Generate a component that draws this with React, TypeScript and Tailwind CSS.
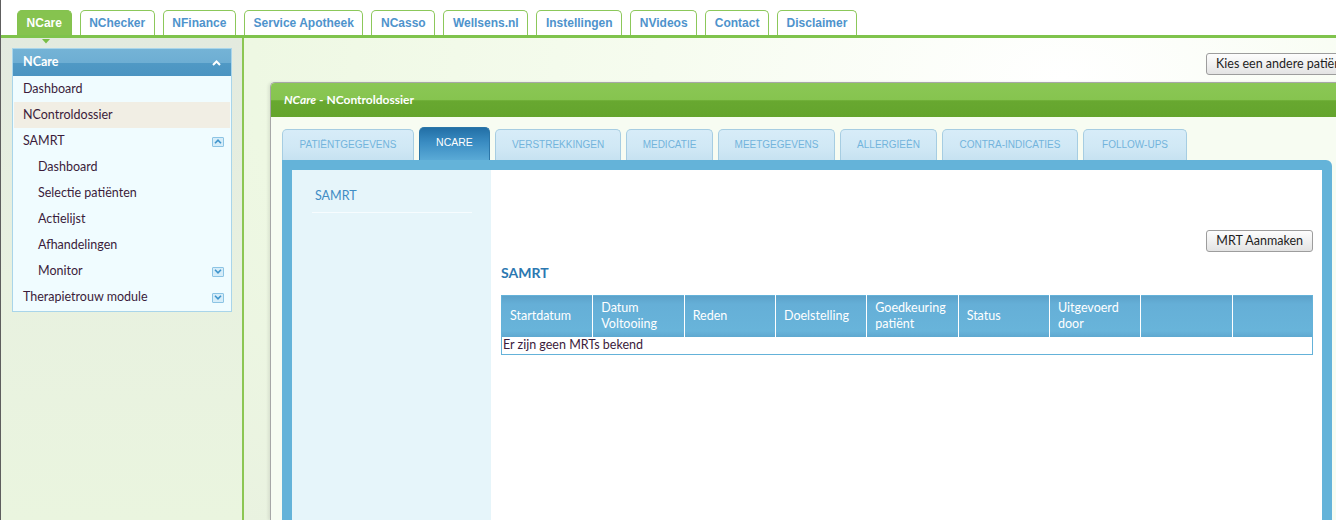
import React from 'react';

const navTabs = [
  'NCare',
  'NChecker',
  'NFinance',
  'Service Apotheek',
  'NCasso',
  'Wellsens.nl',
  'Instellingen',
  'NVideos',
  'Contact',
  'Disclaimer',
];

const dossierTabs: { label: string; w: string; active?: boolean }[] = [
  { label: 'PATIËNTGEGEVENS', w: 'w-[132px]' },
  { label: 'NCARE', w: 'w-[71px]', active: true },
  { label: 'VERSTREKKINGEN', w: 'w-[126px]' },
  { label: 'MEDICATIE', w: 'w-[87px]' },
  { label: 'MEETGEGEVENS', w: 'w-[117px]' },
  { label: 'ALLERGIEËN', w: 'w-[97px]' },
  { label: 'CONTRA-INDICATIES', w: 'w-[136px]' },
  { label: 'FOLLOW-UPS', w: 'w-[104px]' },
];

const columns: { label: React.ReactNode; w: string }[] = [
  { label: 'Startdatum', w: 'w-[91px]' },
  { label: <>Datum<br />Voltooiing</>, w: 'w-[91px]' },
  { label: 'Reden', w: 'w-[91px]' },
  { label: 'Doelstelling', w: 'w-[91px]' },
  { label: <>Goedkeuring<br />patiënt</>, w: 'w-[91px]' },
  { label: 'Status', w: 'w-[91px]' },
  { label: <>Uitgevoerd<br />door</>, w: 'w-[91px]' },
  { label: '', w: 'w-[91px]' },
  { label: '', w: 'w-[80px]' },
];

function ToggleIcon({ up }: { up?: boolean }) {
  return (
    <span className="flex h-[10px] w-[12px] items-center justify-center rounded-[1px] border border-[#8cc4e4] bg-[#d6edf9]">
      <svg width="8" height="5" viewBox="0 0 8 5">
        <polyline
          points={up ? '1,4.2 4,1.2 7,4.2' : '1,0.8 4,3.8 7,0.8'}
          fill="none"
          stroke="#3f95cc"
          strokeWidth="1.6"
        />
      </svg>
    </span>
  );
}

function SideItem({
  label,
  sub,
  active,
  toggle,
}: {
  label: string;
  sub?: boolean;
  active?: boolean;
  toggle?: 'up' | 'down';
}) {
  return (
    <div
      className={`flex h-[26px] items-center justify-between pr-[6px] pt-[1px] ${sub ? 'pl-[24px]' : 'pl-[9px]'} ${
        active ? 'bg-[#f1eee4]' : ''
      }`}
    >
      <span>{label}</span>
      {toggle && <ToggleIcon up={toggle === 'up'} />}
    </div>
  );
}

export default function App() {
  return (
    <div className="relative h-[520px] w-[1336px] overflow-hidden border-l border-[#5e5e5e] bg-white [font-family:Lato,'Open_Sans',sans-serif]">
      {/* hoofdmenu */}
      <div className="flex h-[35px] items-end gap-[8px] pl-[16px] [font-family:'Liberation_Sans',Arial,sans-serif]">
        {navTabs.map((t, i) => (
          <div
            key={t}
            className={`flex h-[25px] items-center rounded-t-[5px] border border-b-0 px-[8.6px] text-[12px] font-bold ${
              i === 0
                ? 'border-[#84c24f] bg-[#86c34f] text-white'
                : 'border-[#8cc85a] bg-white text-[#4e93cc]'
            }`}
          >
            {t}
          </div>
        ))}
      </div>
      <div className="h-[3px] bg-[#7fc34c]" />

      <div className="flex h-[482px]">
        {/* linker kolom */}
        <div className="relative w-[243px] shrink-0 border-r-2 border-[#8cc653] bg-[linear-gradient(180deg,#e3eadf_0%,#e8f1e0_50%,#eaf5df_100%)] pl-[11px] pt-[10px]">
          <svg className="absolute left-[41px] top-[1px]" width="8" height="5" viewBox="0 0 8 5">
            <polygon points="0,0 8,0 4,4.5" fill="#79bd45" />
          </svg>
          <div className="w-[220px] border border-[#a9d5ea] bg-[#f0fcff] pb-[1px] text-[12.5px] text-[#3b1c3b]">
            <div className="flex h-[27px] items-center justify-between bg-[linear-gradient(180deg,#74b3d6_0%,#6eaed3_50%,#5099c5_52%,#4b94c1_100%)] pl-[10px] pr-[10px] font-bold text-white">
              <span>NCare</span>
              <svg width="9" height="6" viewBox="0 0 9 6">
                <polyline points="1,5 4.5,1.5 8,5" fill="none" stroke="#ffffff" strokeWidth="2" />
              </svg>
            </div>
            <div className="px-[1px]">
              <SideItem label="Dashboard" />
              <SideItem label="NControldossier" active />
              <SideItem label="SAMRT" toggle="up" />
              <SideItem label="Dashboard" sub />
              <SideItem label="Selectie patiënten" sub />
              <SideItem label="Actielijst" sub />
              <SideItem label="Afhandelingen" sub />
              <SideItem label="Monitor" sub toggle="down" />
              <SideItem label="Therapietrouw module" toggle="down" />
            </div>
          </div>
        </div>

        {/* hoofdgedeelte */}
        <div className="relative min-w-0 flex-1 overflow-hidden bg-[radial-gradient(ellipse_at_75%_8%,#ffffff_0%,#f6fcef_35%,#eef8e3_70%,#e9f2e0_100%)]">
          <div className="flex pl-[962px] pt-[15px]">
            <button className="h-[22px] whitespace-nowrap rounded-[3px] border border-[#9d9d9d] bg-[linear-gradient(180deg,#fdfdfd_0%,#f1f1f1_50%,#e3e3e3_100%)] px-[9px] text-[12.5px] text-[#1e1e1e]">
              Kies een andere patiënt
            </button>
          </div>

          <div className="ml-[26px] mt-[7px] w-[1100px] rounded-tl-[5px] border-l border-t border-[#a7a7a7] bg-[#f7fcf2] shadow-[-2px_0_3px_rgba(0,0,0,0.08)]">
            <div className="flex h-[34px] items-center rounded-tl-[4px] bg-[linear-gradient(180deg,#8bc755_0%,#86c44f_50%,#68a830_52%,#64a42d_100%)] pl-[13px] text-[12px] font-bold text-white">
              <span className="italic">NCare</span>
              <span className="whitespace-pre"> - NControldossier</span>
            </div>

            <div className="pl-[11px] pt-[11px]">
              {/* tabs */}
              <div className="flex h-[32px] items-end gap-[5px] [font-family:'Liberation_Sans',Arial,sans-serif]">
                {dossierTabs.map((t) =>
                  t.active ? (
                    <div
                      key={t.label}
                      className={`${t.w} flex h-[33px] items-center justify-center rounded-t-[5px] border border-b-0 border-[#2b76a8] bg-[linear-gradient(180deg,#226fa6_0%,#3a8cc2_45%,#5aaad6_100%)] pb-[2px] text-[10.5px] text-white`}
                    >
                      {t.label}
                    </div>
                  ) : (
                    <div
                      key={t.label}
                      className={`${t.w} flex h-[31px] items-center justify-center rounded-t-[5px] border border-b-0 border-[#a6cde2] bg-[linear-gradient(180deg,#d7ecf8_0%,#d0e8f5_60%,#c6e2f1_100%)] pb-[2px] text-[10px] text-[#73b4dc]`}
                    >
                      {t.label}
                    </div>
                  )
                )}
              </div>

              {/* inhoud */}
              <div className="flex h-[360px] w-[1050px] rounded-tr-[6px] bg-[#64b3d9] px-[10px] pt-[10px]">
                <div className="w-[199px] shrink-0 bg-[#e6f5fa]">
                  <div className="ml-[20px] w-[160px] border-b border-[#f7fcfe] pb-[8px] pl-[3px] pt-[18px] text-[12.5px] leading-[16px] text-[#3f8cc4]">
                    SAMRT
                  </div>
                </div>
                <div className="flex-1 bg-white pl-[10px] pr-[9px]">
                  <div className="flex justify-end pt-[60px]">
                    <button className="h-[22px] rounded-[3px] border border-[#9d9d9d] bg-[linear-gradient(180deg,#fdfdfd_0%,#f1f1f1_50%,#e3e3e3_100%)] px-[9px] text-[12.5px] text-[#1e1e1e]">
                      MRT Aanmaken
                    </button>
                  </div>
                  <div className="mt-[11px] h-[20px] text-[14px] font-bold leading-[20px] text-[#2b78b1]">SAMRT</div>
                  <table className="mt-[12px] w-[812px] border-collapse border border-[#64b2d9] text-[12.5px]">
                    <thead>
                      <tr className="bg-[linear-gradient(180deg,#5ca2ca_0%,#65afd7_20%,#68b4da_85%,#5ea8d0_100%)]">
                        {columns.map((c, i) => (
                          <th
                            key={i}
                            className={`${c.w} h-[41px] border-r border-white px-[8px] text-left align-middle text-[12.5px] font-normal leading-[16px] text-white last:border-r-0`}
                          >
                            {c.label}
                          </th>
                        ))}
                      </tr>
                    </thead>
                    <tbody>
                      <tr>
                        <td colSpan={9} className="h-[18px] px-[1px] leading-[16px] text-[#3b1c3b]">
                          Er zijn geen MRTs bekend
                        </td>
                      </tr>
                    </tbody>
                  </table>
                </div>
              </div>
            </div>
          </div>
        </div>
      </div>
    </div>
  );
}
